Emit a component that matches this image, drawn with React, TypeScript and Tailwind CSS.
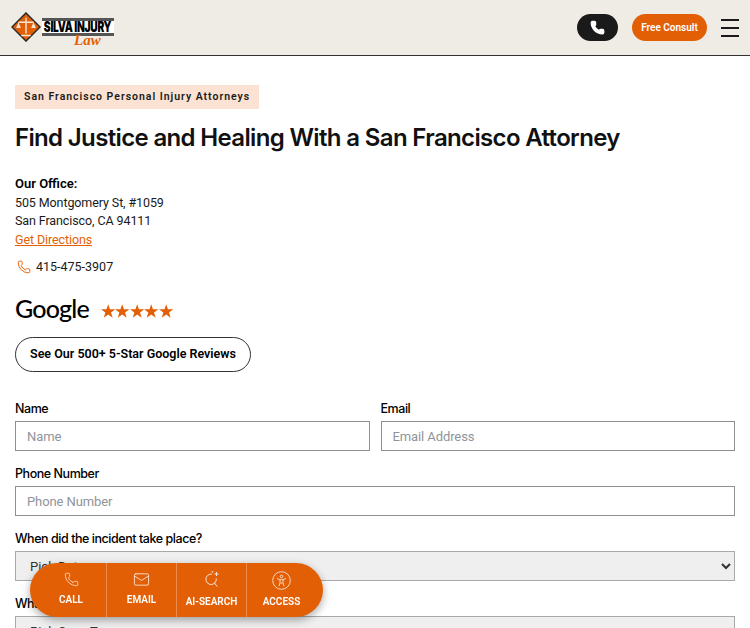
import { Phone, Mail } from "lucide-react";

const font = { fontFamily: "Roboto, 'Liberation Sans', sans-serif" };

function Logo() {
  return (
    <div className="flex items-start gap-[1px] h-[34px]">
      <svg width="30" height="30" viewBox="0 0 32 32" className="mt-[1px]">
        <path d="M16 1 L31 16 L16 31 L1 16 Z" fill="#e35f05" stroke="#2b2b2b" strokeWidth="1.6" />
        <path d="M16 6v17M11 25h10M8 11h16" stroke="#f6e6da" strokeWidth="1.5" fill="none" />
        <path d="M8 11l-2.5 6h5zM24 11l-2.5 6h5z" fill="#f6e6da" />
      </svg>
      <div className="relative w-[72px] h-[34px]">
        <div className="bg-white border-y-[3px] border-[#555] h-[18px] w-[72px] mt-[7px] flex items-center justify-center overflow-hidden">
          <span className="font-['Inter'] text-[15px] font-black leading-none tracking-[-0.4px] text-black whitespace-nowrap scale-x-[0.68]">SILVA INJURY</span>
        </div>
        <span className="absolute left-[32px] top-[22px] text-[15px] italic font-bold leading-none text-[#e35f05] font-['Liberation_Serif',serif]">Law</span>
      </div>
    </div>
  );
}

function Field({ label, placeholder }: { label: string; placeholder: string }) {
  return (
    <div className="flex-1 min-w-0">
      <label className="block font-['Inter'] text-[12.5px] tracking-[-0.45px] font-medium leading-[16px] mb-[4px] text-black">{label}</label>
      <input
        placeholder={placeholder}
        className="block w-full h-[30px] border border-[#8f8f8f] px-[11px] text-[13px] tracking-[-0.1px] bg-white placeholder:text-[#8f949b] outline-none"
      />
    </div>
  );
}

function SelectField({ label, value }: { label: string; value: string }) {
  return (
    <div>
      <label className="block font-['Inter'] text-[12.5px] tracking-[-0.45px] font-medium leading-[16px] mb-[4px] text-black">{label}</label>
      <select className="block w-full h-[30px] border border-[#a9a9a9] px-[10px] text-[13px] bg-[#efefef] text-[#333]">
        <option>{value}</option>
      </select>
    </div>
  );
}

function BarItem({ icon, label, border, pad }: { icon: React.ReactNode; label: string; border?: boolean; pad: string }) {
  return (
    <div className={`h-full flex flex-col items-center ${pad} ${border ? "border-l border-[#ee8a4a]" : ""}`}>
      <div className="h-[20px] flex items-center justify-center">{icon}</div>
      <span className="text-[10px] font-semibold leading-[12px] text-white mt-auto whitespace-nowrap">{label}</span>
    </div>
  );
}

function Stars() {
  return (
    <div className="flex ml-[12px] mt-[3px]">
      {[0, 1, 2, 3, 4].map((i) => (
        <svg key={i} width="14.4" height="14" viewBox="0 0 20 19" fill="#e35f05">
          <polygon points="10,0 12.4,7 20,7 13.9,11.6 16.2,19 10,14.4 3.8,19 6.1,11.6 0,7 7.6,7" />
        </svg>
      ))}
    </div>
  );
}

export default function App() {
  return (
    <div style={font} className="w-[750px] h-[628px] overflow-hidden bg-white text-[#1a1a1a] relative">
      <header className="h-[56px] bg-[#efebe5] border-b border-[#333] flex items-center pl-[11px] pr-[11px]">
        <Logo />
        <div className="ml-auto flex items-center">
          <div className="w-[41px] h-[27px] rounded-full bg-[#1a1a1a] flex items-center justify-center">
            <Phone size={15} fill="white" stroke="white" />
          </div>
          <div className="ml-[14px] w-[75px] h-[27px] rounded-full bg-[#e35f05] text-white text-[10px] font-semibold flex items-center justify-center">
            Free Consult
          </div>
          <div className="ml-[14px] w-[18px] flex flex-col gap-[6px]">
            <div className="h-[2px] bg-[#1a1a1a]" />
            <div className="h-[2px] bg-[#1a1a1a]" />
            <div className="h-[2px] bg-[#1a1a1a]" />
          </div>
        </div>
      </header>

      <main className="px-[15px] pt-[29px]">
        <div className="w-fit bg-[#fbe2d2] px-[9px] h-[24px] leading-[24px] text-[10.5px] font-semibold tracking-[0.98px] text-[#1a1a1a]">
          San Francisco Personal Injury Attorneys
        </div>
        <h1 className="font-['Inter'] text-[24px] font-semibold leading-[32px] tracking-[-0.65px] mt-[13px] text-[#111]">
          Find Justice and Healing With a San Francisco Attorney
        </h1>

        <div className="mt-[21px] text-[12.5px] tracking-[-0.1px] leading-[18.5px]">
          <p className="text-[13px] tracking-normal font-semibold text-black">Our Office:</p>
          <p>505 Montgomery St, #1059</p>
          <p>San Francisco, CA 94111</p>
          <a className="text-[#e35f05] underline">Get Directions</a>
        </div>
        <div className="mt-[8px] flex items-center gap-[5px] text-[12.5px] leading-[19px]">
          <Phone size={14} className="text-[#e35f05] ml-[2px]" strokeWidth={1.6} />
          <span>415-475-3907</span>
        </div>

        <div className="mt-[16px] flex items-center h-[34px]">
          <span className="text-[25px] font-medium tracking-[-0.8px] text-black font-['Lato',sans-serif]">Google</span>
          <Stars />
        </div>

        <div className="mt-[11px] w-[236px] h-[35px] rounded-full border border-[#333] flex items-center justify-center text-[12.5px] font-semibold text-black">
          See Our 500+ 5-Star Google Reviews
        </div>

        <div className="mt-[29px] flex gap-[11px]">
          <Field label="Name" placeholder="Name" />
          <Field label="Email" placeholder="Email Address" />
        </div>
        <div className="mt-[15px]">
          <Field label="Phone Number" placeholder="Phone Number" />
        </div>
        <div className="mt-[15px]">
          <SelectField label="When did the incident take place?" value="Pick Date" />
        </div>
        <div className="mt-[15px]">
          <SelectField label="What type of case is this?" value="Pick Case Type" />
        </div>
      </main>

      <div className="fixed left-[30px] top-[563px] w-[293px] h-[54px] rounded-full bg-[#e35f05] shadow-[0_3px_8px_rgba(0,0,0,0.35)] flex items-stretch">
        <BarItem pad="w-[76px] pl-[6px] pt-[6px] pb-[11px]" label="CALL" icon={<Phone size={15} stroke="#fbe2d2" strokeWidth={1.3} />} />
        <BarItem pad="w-[70px] pt-[6px] pb-[11px]" border label="EMAIL" icon={<Mail size={17} stroke="#fbe2d2" strokeWidth={1.3} />} />
        <BarItem
          pad="w-[70px] pt-[6px] pb-[9px]"
          border
          label="AI-SEARCH"
          icon={
            <svg width="16" height="17" viewBox="0 0 16 17" fill="none" stroke="#fbe2d2" strokeWidth="1">
              <path d="M8 3.2a5.2 5.2 0 1 0 4.2 4.2M10.2 11.6l3 4" />
              <path d="M12.5 1v4M10.5 3h4" strokeWidth="1.1" />
              <circle cx="8.5" cy="0.8" r="0.5" />
            </svg>
          }
        />
        <BarItem
          pad="w-[70px] pt-[7px] pb-[9px]"
          border
          label="ACCESS"
          icon={
            <svg width="19" height="19" viewBox="0 0 19 19" fill="none" stroke="#fbe2d2" strokeWidth="0.9">
              <circle cx="9.5" cy="9.5" r="8.8" />
              <circle cx="9.5" cy="5.5" r="1.3" />
              <path d="M5 7.5l3 1.2h3l3-1.2M8 8.7v3l-1 3.5M11 8.7v3l1 3.5M8.4 12h2.2" />
            </svg>
          }
        />
      </div>
    </div>
  );
}
